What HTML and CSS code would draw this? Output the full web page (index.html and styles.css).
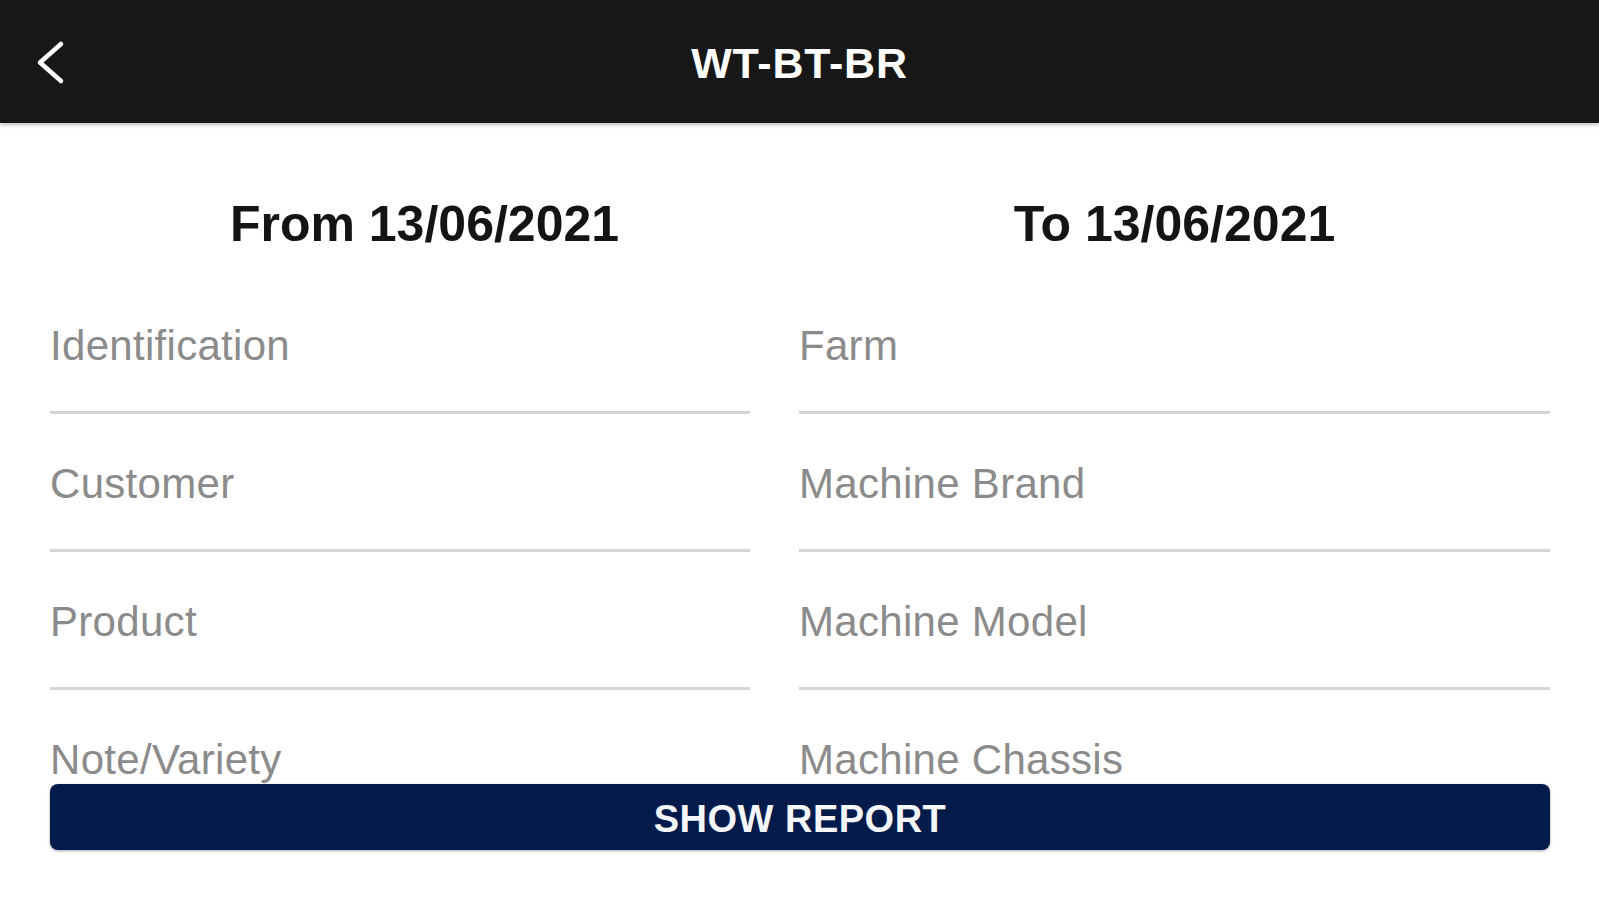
FILE: index.html
```html
<!DOCTYPE html>
<html lang="en">
<head>
<meta charset="utf-8">
<title>WT-BT-BR</title>
<link rel="stylesheet" href="styles.css">
</head>
<body>
<div class="app">
  <header class="topbar">
    <button class="back" aria-label="Back">
      <svg width="30" height="46" viewBox="0 0 30 46"><polyline points="25,4 4,22.5 25,41" fill="none" stroke="#fff" stroke-width="4.5" stroke-linecap="round" stroke-linejoin="round"/></svg>
    </button>
    <h1 class="title">WT-BT-BR</h1>
  </header>
  <main class="content">
    <div class="dates">
      <div class="date date-from">From 13/06/2021</div>
      <div class="date date-to">To 13/06/2021</div>
    </div>
    <div class="fields">
      <div class="field"><span class="label">Identification</span></div>
      <div class="field"><span class="label">Farm</span></div>
      <div class="field"><span class="label">Customer</span></div>
      <div class="field"><span class="label">Machine Brand</span></div>
      <div class="field"><span class="label">Product</span></div>
      <div class="field"><span class="label">Machine Model</span></div>
      <div class="field"><span class="label">Note/Variety</span></div>
      <div class="field"><span class="label">Machine Chassis</span></div>
    </div>
  </main>
  <footer class="footer">
    <button class="report">SHOW REPORT</button>
  </footer>
</div>
</body>
</html>
```

FILE: styles.css
```css
* { box-sizing: border-box; }
html, body { margin: 0; padding: 0; background: #fff; }
body { font-family: "Liberation Sans", Arial, sans-serif; }
.app { height: 900px; display: flex; flex-direction: column; overflow: hidden; }

.topbar {
  position: relative;
  z-index: 2;
  height: 123px;
  flex: 0 0 123px;
  background: #171717;
  display: flex;
  align-items: center;
  justify-content: center;
  box-shadow: 0 2px 4px rgba(0,0,0,0.25);
}
.back {
  position: absolute;
  left: 36px;
  top: 40px;
  width: 30px;
  height: 46px;
  padding: 0;
  border: 0;
  background: transparent;
  display: block;
}
.back svg { display: block; }
.title {
  margin: 0;
  color: #fff;
  font-size: 43px;
  font-weight: 700;
  letter-spacing: 0.8px;
  line-height: 1;
  padding-top: 3px;
}

.content {
  flex: 1 1 auto;
  overflow: hidden;
  padding: 71px 49px 0 50px;
}
.dates {
  display: grid;
  grid-template-columns: 700px 1fr;
  column-gap: 49px;
  height: 60px;
  margin-bottom: 22px;
}
.date {
  font-size: 50px;
  font-weight: 700;
  line-height: 60px;
  color: #141414;
  text-align: center;
}
.date-from { padding-left: 49px; }

.fields {
  display: grid;
  grid-template-columns: 700px 1fr;
  column-gap: 49px;
}
.field {
  height: 138px;
  border-bottom: 3px solid #d4d4d4;
  padding-top: 46px;
}
.label {
  display: block;
  font-size: 42px;
  line-height: 48px;
  letter-spacing: 0.3px;
  color: #8b8b8b;
}

.footer {
  flex: 0 0 116px;
  padding: 0 49px 50px 50px;
}
.report {
  display: block;
  width: 100%;
  height: 66px;
  border: 0;
  border-radius: 8px;
  background: #021b4b;
  color: #f4f6fa;
  font-family: "Liberation Sans", Arial, sans-serif;
  font-size: 38px;
  font-weight: 700;
  letter-spacing: 0.5px;
  box-shadow: 0 1px 3px rgba(0,0,0,0.35);
  padding: 4px 0 0;
}
```
